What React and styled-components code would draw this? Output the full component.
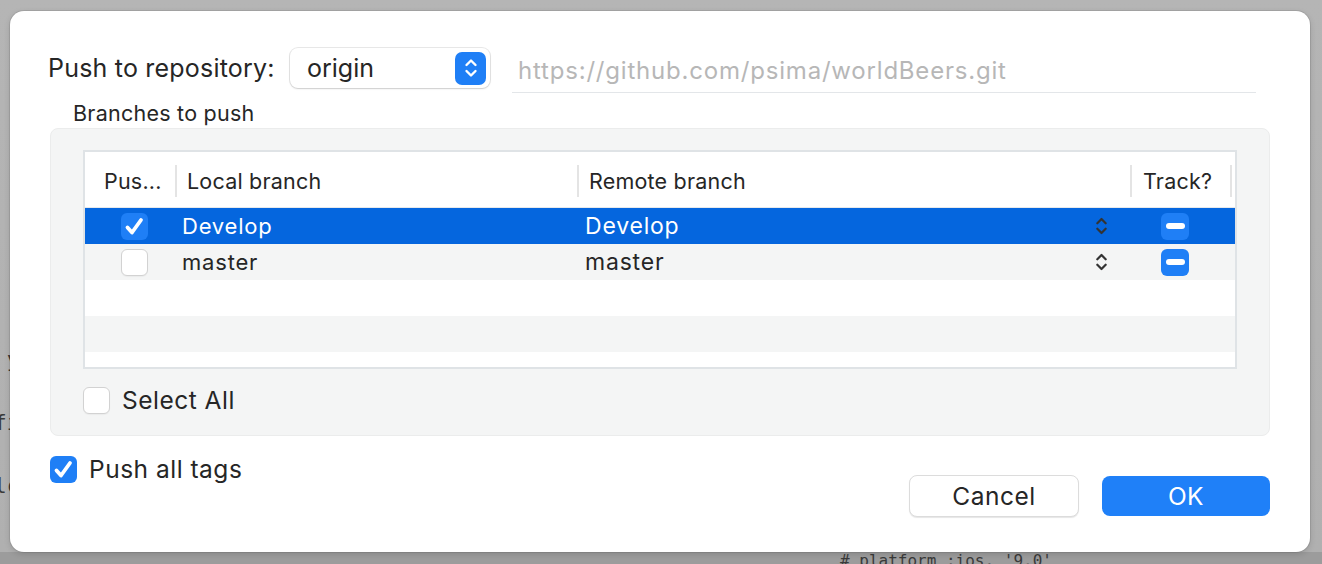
import React from "react"
import styled, { createGlobalStyle, css } from "styled-components"

const GlobalStyle = createGlobalStyle`
  html, body {
    margin: 0;
    padding: 0;
    height: 100%;
    overflow: hidden;
  }
  body {
    background: #b4b4b4;
    font-family: Inter, "Liberation Sans", sans-serif;
    color: #262626;
  }
  #root {
    height: 100%;
  }
`

const Screen = styled.div`
  position: relative;
  width: 1322px;
  height: 564px;
  display: flex;
  padding: 11px 12px 12px 10px;
  box-sizing: border-box;
  background: linear-gradient(to bottom, #b5b5b5 0, #b0b0b0 552px, #9c9c9c 552px);
`

// code editor behind the sheet, only its edges show
const Backdrop = styled.pre`
  position: absolute;
  margin: 0;
  font-family: "DejaVu Sans Mono", monospace;
  font-size: 21px;
  color: #3a3a3a;
  line-height: 1;
`

const Dialog = styled.div`
  position: relative;
  flex: 1;
  min-width: 0;
  background: #fff;
  border-radius: 14px;
  box-shadow: 0 0 0 1px rgba(0, 0, 0, 0.08), 0 2px 6px rgba(0, 0, 0, 0.15);
  display: flex;
  flex-direction: column;
  padding: 37px 40px 0 40px;
`

const RepoRow = styled.div`
  display: flex;
  align-items: center;
  height: 40px;
  margin-left: -2px;
`

const Label = styled.span`
  font-size: 25px;
  letter-spacing: 0.2px;
  width: 242px;
  flex-shrink: 0;
`

const PopUp = styled.div`
  width: 200px;
  height: 40px;
  box-sizing: border-box;
  border-radius: 8px;
  background: #fff;
  box-shadow: 0 0 0 1px rgba(0, 0, 0, 0.09), 0 1px 2px rgba(0, 0, 0, 0.12);
  display: flex;
  align-items: center;
  justify-content: space-between;
  padding: 0 4px 0 17px;
  font-size: 25px;
`

const StepperKnob = styled.span`
  width: 31px;
  height: 33px;
  border-radius: 7px;
  background: #1f7ff6;
  display: flex;
  align-items: center;
  justify-content: center;
`

const UrlField = styled.div`
  flex: 1;
  min-width: 0;
  margin: 8px 14px 0 22px;
  height: 42px;
  box-sizing: border-box;
  border-bottom: 1.5px solid #e3e6e9;
  display: flex;
  align-items: center;
  padding: 0 0 3px 6px;
  font-size: 24px;
  color: #b7b7b7;
  letter-spacing: 0.8px;
`

const GroupTitle = styled.div`
  margin: 12px 0 0 23px;
  font-size: 21.5px;
  letter-spacing: 0.25px;
  line-height: 26px;
  height: 27px;
`

const GroupBox = styled.div`
  margin-top: 1px;
  height: 308px;
  box-sizing: border-box;
  background: #f4f5f5;
  border: 1px solid #ebecec;
  border-radius: 8px;
  padding: 21px 32px 0 32px;
  display: flex;
  flex-direction: column;
`

const Table = styled.div`
  height: 219px;
  box-sizing: border-box;
  border: 2px solid #dfe3e6;
  background: #fff;
  overflow: hidden;
`

const columns = "90px 402px 553px 100px minmax(0, 1fr)"

const HeaderRow = styled.div`
  display: grid;
  grid-template-columns: ${columns};
  height: 56px;
  border-bottom: 1px solid #e6e9ec;
  box-sizing: border-box;
`

const HeaderCell = styled.div`
  display: flex;
  align-items: center;
  font-size: 21.5px;
  letter-spacing: 0.2px;
  margin: 13px 0 10px;
  padding-left: ${p => p.$pad ?? 10}px;
  ${p => p.$sep && css`
    border-left: 2px solid #e4e4e4;
  `}
`

const Row = styled.div`
  display: grid;
  grid-template-columns: ${columns};
  height: 36px;
  align-items: center;
  background: ${p => (p.$selected ? "#0566de" : p.$alt ? "#f4f5f5" : "#fff")};
  color: ${p => (p.$selected ? "#fff" : "#262626")};
`

const Cell = styled.div`
  display: flex;
  align-items: center;
  padding-left: ${p => p.$pad ?? 0}px;
  font-size: 22px;
  letter-spacing: 0.8px;
`

const RemoteCell = styled(Cell)`
  justify-content: space-between;
  padding: 0 22px 0 8px;
  font-size: 23px;
`

const Box = styled.span`
  width: 27px;
  height: 27px;
  box-sizing: border-box;
  border-radius: 6px;
  flex-shrink: 0;
  display: flex;
  align-items: center;
  justify-content: center;
  ${p => p.$checked ? css`
    background: #1f7ff6;
  ` : css`
    background: #fff;
    border: 1px solid #d2d2d2;
    box-shadow: 0 1px 1px rgba(0, 0, 0, 0.04);
  `}
`

const MinusButton = styled.span`
  width: 28px;
  height: 27px;
  border-radius: 6px;
  background: #1f7ff6;
  display: flex;
  align-items: center;
  justify-content: center;
  &::after {
    content: "";
    width: 19px;
    height: 6px;
    border-radius: 3px;
    background: #fff;
  }
`

const CheckRow = styled.label`
  display: flex;
  align-items: center;
  gap: 12px;
  font-size: 24.5px;
  letter-spacing: 0.5px;
`

const SelectAllRow = styled(CheckRow)`
  margin-top: 16px;
`

const Footer = styled.div`
  display: flex;
  justify-content: space-between;
  align-items: flex-start;
  margin-top: 18px;
`

const Buttons = styled.div`
  display: flex;
  gap: 23px;
  margin-top: 21px;
`

const Button = styled.button`
  width: 170px;
  height: 42px;
  border-radius: 8px;
  font-family: inherit;
  font-size: 24.5px;
  letter-spacing: 0.5px;
  display: flex;
  align-items: center;
  justify-content: center;
  padding: 0;
  ${p => p.$primary ? css`
    background: #1f80f8;
    color: #fff;
    border: none;
    width: 168px;
    height: 40px;
    margin-top: 1px;
  ` : css`
    background: #fff;
    color: #262626;
    border: 1px solid #dcdcdc;
    box-shadow: 0 1px 1px rgba(0, 0, 0, 0.1);
  `}
`

function Check() {
  return (
    <svg width="21" height="19" viewBox="0 0 21 19">
      <path d="M3.5 10.5 L8 15.5 L17 3" fill="none" stroke="#fff" strokeWidth="3.8" strokeLinecap="round" strokeLinejoin="round" />
    </svg>
  )
}

function Checkbox({ checked }) {
  return <Box $checked={checked}>{checked && <Check />}</Box>
}

function UpDown({ color = "#fff", w = 14, h = 22 }) {
  return (
    <svg width={w} height={h} viewBox="0 0 14 22">
      <path d="M2.5 8 L7 3.5 L11.5 8 M2.5 14 L7 18.5 L11.5 14" fill="none" stroke={color} strokeWidth="2.4" strokeLinecap="round" strokeLinejoin="round" />
    </svg>
  )
}

const branches = [
  { local: "Develop", remote: "Develop", push: true, selected: true },
  { local: "master", remote: "master", push: false },
]

export default function App() {
  return (
    <>
      <GlobalStyle />
      <Screen>
        <Backdrop style={{ left: -6, top: 350 }}>{" y\n\n\nfi\n\n\nlc"}</Backdrop>
        <Backdrop style={{ left: 840, top: 553, fontSize: 16, letterSpacing: 0 }}>{"# platform :ios, '9.0'"}</Backdrop>
        <Dialog>
          <RepoRow>
            <Label>Push to repository:</Label>
            <PopUp>
              origin
              <StepperKnob><UpDown /></StepperKnob>
            </PopUp>
            <UrlField>https://github.com/psima/worldBeers.git</UrlField>
          </RepoRow>

          <GroupTitle>Branches to push</GroupTitle>
          <GroupBox>
            <Table>
              <HeaderRow>
                <HeaderCell $pad={19}>Pus...</HeaderCell>
                <HeaderCell $sep>Local branch</HeaderCell>
                <HeaderCell $sep>Remote branch</HeaderCell>
                <HeaderCell $sep $pad={11}>Track?</HeaderCell>
                <HeaderCell $sep $pad={0} />
              </HeaderRow>
              {branches.map((b, i) => (
                <Row key={b.local} $selected={b.selected} $alt={i % 2 === 1}>
                  <Cell $pad={36}><Checkbox checked={b.push} /></Cell>
                  <Cell $pad={7}>{b.local}</Cell>
                  <RemoteCell>
                    {b.remote}
                    <UpDown color="#333" w={13} h={22} />
                  </RemoteCell>
                  <Cell $pad={31}><MinusButton /></Cell>
                  <Cell />
                </Row>
              ))}
              <Row />
              <Row $alt />
              <Row />
            </Table>
            <SelectAllRow>
              <Checkbox />
              Select All
            </SelectAllRow>
          </GroupBox>

          <Footer>
            <CheckRow>
              <Checkbox checked />
              Push all tags
            </CheckRow>
            <Buttons>
              <Button>Cancel</Button>
              <Button $primary>OK</Button>
            </Buttons>
          </Footer>
        </Dialog>
      </Screen>
    </>
  )
}
